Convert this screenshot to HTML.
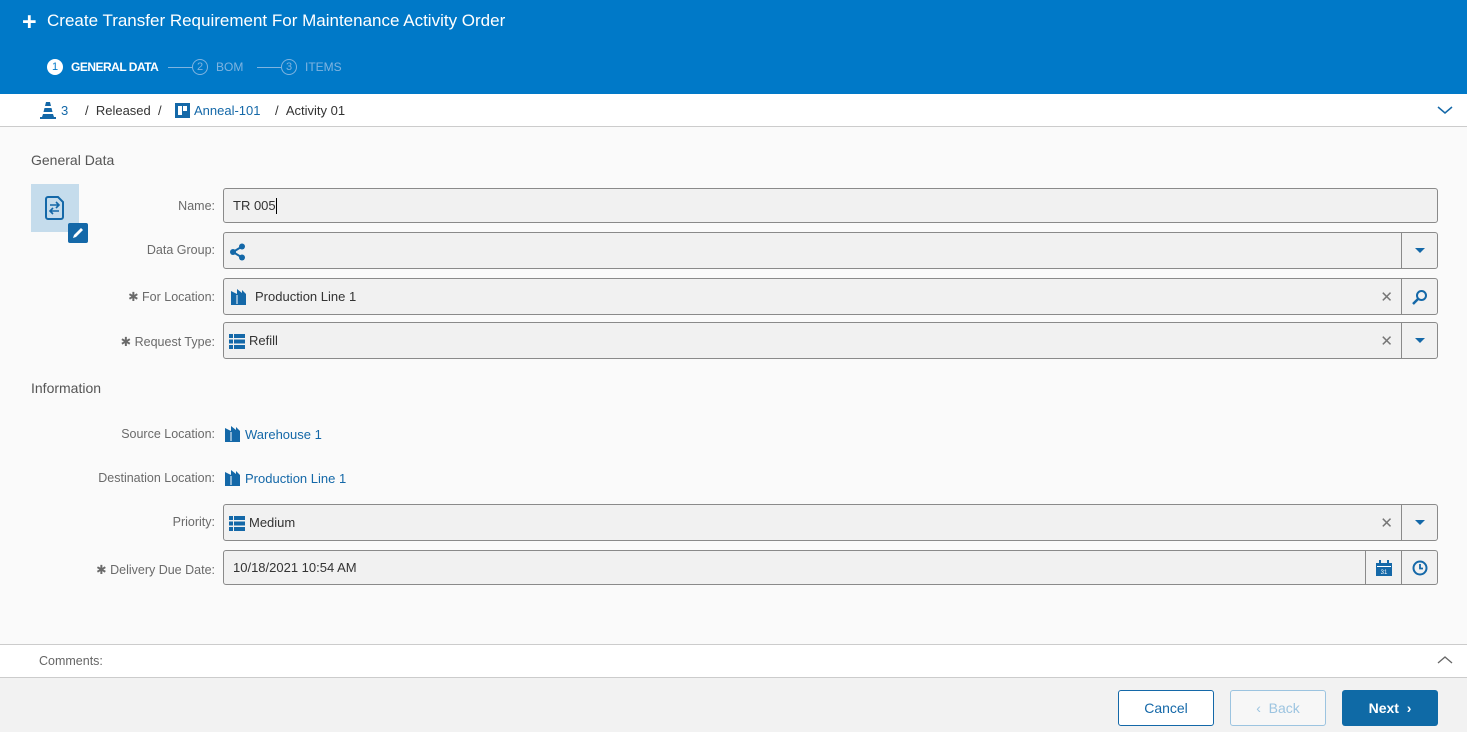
<!DOCTYPE html>
<html><head><style>
*{box-sizing:border-box;margin:0;padding:0}
body{width:1467px;height:732px;overflow:hidden;background:#fafafa;font-family:"Liberation Sans",sans-serif;font-size:13px;color:#333;position:relative}
.abs{position:absolute}
.hdr{left:0;top:0;width:1467px;height:94px;background:#0079c8;color:#fff}
.lbl{position:absolute;right:1252px;font-size:12.5px;color:#6a6a6a;text-align:right;white-space:nowrap}
.inp{position:absolute;left:223px;width:1215px;background:#f1f1f1;border:1px solid #8a8a8a;border-radius:3px}
.btnseg{position:absolute;top:0;bottom:0;width:36px;border-left:1px solid #8a8a8a;display:flex;align-items:center;justify-content:center}
.x{position:absolute;top:0;bottom:0;right:44px;display:flex;align-items:center;color:#777;font-size:15px}
.txt{position:absolute;top:0;bottom:0;display:flex;align-items:center;font-size:13px;color:#333}
.link{color:#1468a8}
.sec{position:absolute;left:31px;font-size:14px;color:#555}
.btn{position:absolute;top:690px;width:96px;height:36px;border-radius:3px;font-size:14px;display:flex;align-items:center;justify-content:center}
</style></head><body>
<div class="abs hdr">
 <div class="abs" style="left:22px;top:8px;font-size:25px;font-weight:bold">+</div>
 <div class="abs" style="left:47px;top:11px;font-size:17px">Create Transfer Requirement For Maintenance Activity Order</div>
 <div class="abs" style="left:47px;top:59px;width:16px;height:16px;border-radius:50%;background:#fff;color:#0079c8;font-size:11px;text-align:center;line-height:16px">1</div>
 <div class="abs" style="left:71px;top:60px;font-size:12px;font-weight:bold;letter-spacing:-0.5px">GENERAL DATA</div>
 <div class="abs" style="left:168px;top:67px;width:24px;height:1px;background:#7fb4e0"></div>
 <div class="abs" style="left:192px;top:59px;width:16px;height:16px;border-radius:50%;border:1px solid #7fb4e0;color:#7fb4e0;font-size:11px;text-align:center;line-height:14px">2</div>
 <div class="abs" style="left:216px;top:60px;font-size:12px;color:#7fb4e0">BOM</div>
 <div class="abs" style="left:257px;top:67px;width:24px;height:1px;background:#7fb4e0"></div>
 <div class="abs" style="left:281px;top:59px;width:16px;height:16px;border-radius:50%;border:1px solid #7fb4e0;color:#7fb4e0;font-size:11px;text-align:center;line-height:14px">3</div>
 <div class="abs" style="left:305px;top:60px;font-size:12px;color:#7fb4e0">ITEMS</div>
</div>
<div class="abs" style="left:0;top:94px;width:1467px;height:33px;background:#fff;border-bottom:1px solid #ccc"></div>
<svg class="abs" style="left:40px;top:102px" width="16" height="17" viewBox="0 0 16 17"><path d="M6 0h4l1 4H5zM4.5 6h7l1 4h-9zM3 12h10l1 3H2z" fill="#1468a8"/><rect x="0" y="15" width="16" height="2" fill="#1468a8"/></svg>
<div class="abs link" style="left:61px;top:103px">3</div>
<div class="abs" style="left:85px;top:103px">/ &nbsp;Released &nbsp;/</div>
<svg class="abs" style="left:175px;top:103px" width="15" height="15"><rect width="15" height="15" fill="#1468a8"/><rect x="3" y="3" width="4" height="9" fill="#fff"/><rect x="8" y="3" width="4" height="5" fill="#fff"/></svg>
<div class="abs link" style="left:194px;top:103px">Anneal-101</div>
<div class="abs" style="left:275px;top:103px">/ &nbsp;Activity 01</div>
<svg class="abs" style="left:1437px;top:105px" width="16" height="10"><path d="M1 2l7 6 7-6" stroke="#1468a8" stroke-width="1.5" fill="none"/></svg>

<div class="sec" style="top:152px">General Data</div>
<div class="abs" style="left:31px;top:184px;width:48px;height:48px;background:#c5dcec"></div>
<svg class="abs" style="left:42px;top:195px" width="24" height="26" viewBox="0 0 24 26"><path d="M6 2h10l5 5v15a2 2 0 0 1-2 2H6a2 2 0 0 1-2-2V4a2 2 0 0 1 2-2z" stroke="#1468a8" stroke-width="2" fill="none"/><path d="M8 10h9M14 7l3 3-3 3M17 16H8M11 13l-3 3 3 3" stroke="#1468a8" stroke-width="1.6" fill="none"/></svg>
<div class="abs" style="left:68px;top:223px;width:20px;height:20px;background:#1468a8;border-radius:2px"></div>
<svg class="abs" style="left:71px;top:226px" width="14" height="14"><path d="M2 12l1-3 7-7 2 2-7 7z" fill="#fff"/></svg>

<div class="lbl" style="top:199px">Name:</div>
<div class="inp" style="top:188px;height:35px"><div class="txt" style="left:9px">TR 005<span style="display:inline-block;width:1px;height:16px;background:#000"></span></div></div>

<div class="lbl" style="top:243px">Data Group:</div>
<div class="inp" style="top:232px;height:37px">
 <svg class="abs" style="left:5px;top:10px" width="18" height="18"><circle cx="4" cy="9" r="3" fill="#1468a8"/><circle cx="13" cy="3.5" r="3" fill="#1468a8"/><circle cx="13" cy="14.5" r="3" fill="#1468a8"/><path d="M4 9L13 3.5M4 9l9 5.5" stroke="#1468a8" stroke-width="2"/></svg>
 <div class="btnseg" style="right:0"><svg width="10" height="6"><path d="M0 0h10L5 5z" fill="#1468a8"/></svg></div>
</div>

<div class="lbl" style="top:289px">✱ For Location:</div>
<div class="inp" style="top:278px;height:37px">
 <svg class="abs" style="left:7px;top:10px" width="16" height="16"><path d="M0 2l6 3V0l5 4V1l4 4v11H0z" fill="#1468a8"/><path d="M6 6v9" stroke="#fff"/></svg>
 <div class="txt" style="left:31px">Production Line 1</div>
 <div class="x">✕</div>
 <div class="btnseg" style="right:0"><svg width="16" height="16"><circle cx="9.5" cy="6.5" r="4.5" stroke="#1468a8" stroke-width="2" fill="none"/><path d="M6 10l-5 5" stroke="#1468a8" stroke-width="2.5"/></svg></div>
</div>

<div class="lbl" style="top:334px">✱ Request Type:</div>
<div class="inp" style="top:322px;height:37px">
 <svg class="abs" style="left:5px;top:11px" width="16" height="15"><g fill="#1468a8"><rect width="4" height="4"/><rect x="5" width="11" height="4"/><rect y="5.5" width="4" height="4"/><rect x="5" y="5.5" width="11" height="4"/><rect y="11" width="4" height="4"/><rect x="5" y="11" width="11" height="4"/></g></svg>
 <div class="txt" style="left:25px">Refill</div>
 <div class="x">✕</div>
 <div class="btnseg" style="right:0"><svg width="10" height="6"><path d="M0 0h10L5 5z" fill="#1468a8"/></svg></div>
</div>

<div class="sec" style="top:380px">Information</div>
<div class="lbl" style="top:427px">Source Location:</div>
<svg class="abs" style="left:225px;top:426px" width="16" height="16"><path d="M0 2l6 3V0l5 4V1l4 4v11H0z" fill="#1468a8"/><path d="M6 6v9" stroke="#fff"/></svg>
<div class="abs link" style="left:245px;top:427px">Warehouse 1</div>
<div class="lbl" style="top:471px">Destination Location:</div>
<svg class="abs" style="left:225px;top:470px" width="16" height="16"><path d="M0 2l6 3V0l5 4V1l4 4v11H0z" fill="#1468a8"/><path d="M6 6v9" stroke="#fff"/></svg>
<div class="abs link" style="left:245px;top:471px">Production Line 1</div>

<div class="lbl" style="top:515px">Priority:</div>
<div class="inp" style="top:504px;height:37px">
 <svg class="abs" style="left:5px;top:11px" width="16" height="15"><g fill="#1468a8"><rect width="4" height="4"/><rect x="5" width="11" height="4"/><rect y="5.5" width="4" height="4"/><rect x="5" y="5.5" width="11" height="4"/><rect y="11" width="4" height="4"/><rect x="5" y="11" width="11" height="4"/></g></svg>
 <div class="txt" style="left:25px">Medium</div>
 <div class="x">✕</div>
 <div class="btnseg" style="right:0"><svg width="10" height="6"><path d="M0 0h10L5 5z" fill="#1468a8"/></svg></div>
</div>

<div class="lbl" style="top:562px">✱ Delivery Due Date:</div>
<div class="inp" style="top:550px;height:35px">
 <div class="txt" style="left:9px">10/18/2021 10:54 AM</div>
 <div class="btnseg" style="right:36px"><svg width="16" height="16"><rect y="3" width="16" height="13" fill="#1468a8"/><rect x="3" width="2" height="4" fill="#1468a8"/><rect x="11" width="2" height="4" fill="#1468a8"/><rect x="1" y="6" width="14" height="1" fill="#fff"/><text x="8" y="14" font-size="6" fill="#fff" text-anchor="middle" font-family="Liberation Sans">31</text></svg></div>
 <div class="btnseg" style="right:0"><svg width="16" height="16"><circle cx="8" cy="8" r="6.5" stroke="#1468a8" stroke-width="2" fill="none"/><path d="M8 4v4.5h3" stroke="#1468a8" stroke-width="1.8" fill="none"/></svg></div>
</div>

<div class="abs" style="left:0;top:644px;width:1467px;height:34px;background:#fff;border-top:1px solid #ccc;border-bottom:1px solid #ccc"></div>
<div class="abs" style="left:39px;top:654px;font-size:12.5px;color:#666">Comments:</div>
<svg class="abs" style="left:1437px;top:655px" width="16" height="10"><path d="M1 8l7-6 7 6" stroke="#666" stroke-width="1.3" fill="none"/></svg>
<div class="abs" style="left:0;top:678px;width:1467px;height:54px;background:#f2f2f2"></div>
<div class="btn" style="left:1118px;border:1px solid #1468a8;color:#1468a8;background:#fff">Cancel</div>
<div class="btn" style="left:1230px;border:1px solid #9cc4e0;color:#9cc4e0;background:#f7f7f7">‹ &nbsp;Back</div>
<div class="btn" style="left:1342px;background:#0f6aa6;color:#fff;font-weight:bold">Next &nbsp;›</div>
</body></html>
